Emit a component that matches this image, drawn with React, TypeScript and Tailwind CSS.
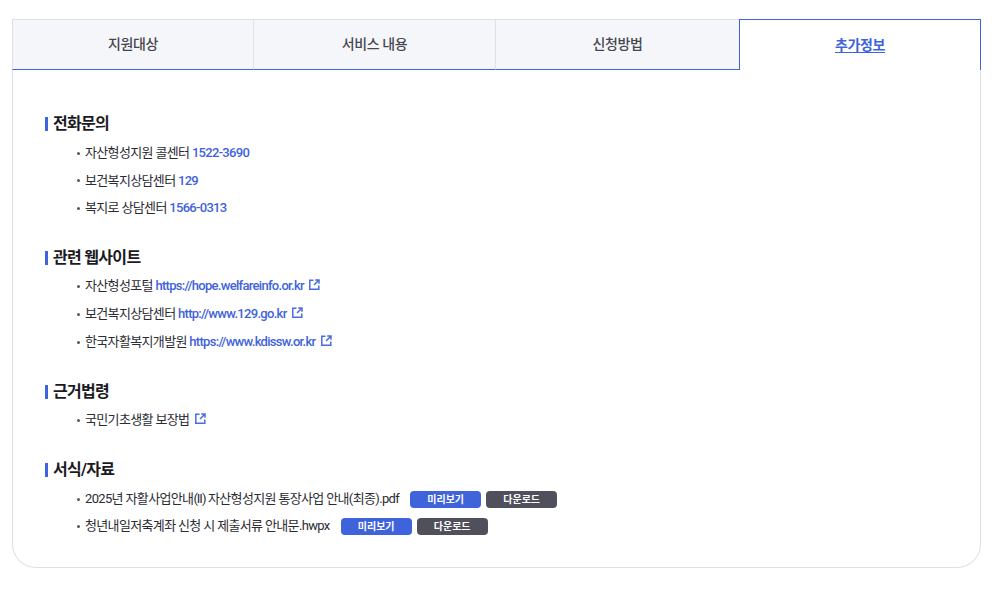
import type { FC } from "react";

const tabs = ["지원대상", "서비스 내용", "신청방법"];

const ExternalIcon: FC = () => (
  <svg width="11" height="11" viewBox="0 0 11 11" fill="none" stroke="#4a6cdf" strokeWidth="1.5" className="ml-[5.5px] mb-[3px] shrink-0">
    <path d="M4.5 1.2H.8v9h9V6.5" />
    <path d="M6.2 1h3.8v3.8M9.8 1.2 5 6" />
  </svg>
);

const Heading: FC<{ text: string }> = ({ text }) => (
  <h3 className="flex items-center h-5 text-[16px] font-bold tracking-[-0.7px] text-[#1b1b1f]">
    <span className="w-[3px] h-[14px] bg-[#3f63db] mr-[5px]" />
    {text}
  </h3>
);

const Row: FC<{ children: React.ReactNode }> = ({ children }) => (
  <li className="flex items-center h-5 pl-[32px] text-[13px] tracking-[-0.65px] text-[#2b2b33]">
    <span className="w-[3px] h-[3px] rounded-full bg-[#55555f] mr-[5px] shrink-0" />
    {children}
  </li>
);

const Val: FC<{ children: React.ReactNode }> = ({ children }) => (
  <span className="ml-[2.5px] font-medium tracking-[-0.7px] text-[#3f63db]">{children}</span>
);

const Btns: FC = () => (
  <span className="flex gap-[5px] ml-[11px]">
    <span className="flex items-center justify-center w-[71px] h-[17px] rounded-[4px] bg-[#3f63db] text-white text-[10px] font-bold tracking-normal">미리보기</span>
    <span className="flex items-center justify-center w-[71px] h-[17px] rounded-[4px] bg-[#50505c] text-white text-[10px] font-bold tracking-normal">다운로드</span>
  </span>
);

export default function App() {
  return (
    <div className="bg-white w-[996px] h-[589px] pt-[19px] pl-[12px] font-['Roboto','Noto_Sans_CJK_KR',sans-serif]">
      <div className="w-[969px] h-[549px] border border-t-0 border-[#e0e0e4] rounded-b-[24px]">
        <div className="flex h-[51px] -mx-px">
          {tabs.map((t, i) => (
            <div
              key={t}
              className={`flex items-center justify-center border-t border-l border-b border-t-[#e0e0e4] border-l-[#dfe1e8] border-b-[#3f63db] bg-[#f5f6fa] text-[14px] font-medium tracking-[-0.4px] text-[#46464f] ${i === 0 ? "w-[241px]" : i === 1 ? "w-[242px]" : "w-[244px]"}`}
            >
              {t}
            </div>
          ))}
          <div className="flex-1 flex items-center justify-center border border-b-0 border-[#3f63db] text-[14px] font-bold tracking-[-0.4px] text-[#3f63db] underline underline-offset-2">
            추가정보
          </div>
        </div>

        <div className="pl-[32px] pt-[44px]">
          <section>
            <Heading text="전화문의" />
            <ul className="mt-[9px] flex flex-col gap-[7.5px]">
              <Row>자산형성지원 콜센터<Val>1522-3690</Val></Row>
              <Row>보건복지상담센터<Val>129</Val></Row>
              <Row>복지로 상담센터<Val>1566-0313</Val></Row>
            </ul>
          </section>
          <section className="mt-[30px]">
            <Heading text="관련 웹사이트" />
            <ul className="mt-[8px] flex flex-col gap-[8px]">
              <Row>자산형성포털<Val>https://hope.welfareinfo.or.kr</Val><ExternalIcon /></Row>
              <Row>보건복지상담센터<Val>http://www.129.go.kr</Val><ExternalIcon /></Row>
              <Row>한국자활복지개발원<Val>https://www.kdissw.or.kr</Val><ExternalIcon /></Row>
            </ul>
          </section>
          <section className="mt-[30px]">
            <Heading text="근거법령" />
            <ul className="mt-[8px]">
              <Row>국민기초생활 보장법<ExternalIcon /></Row>
            </ul>
          </section>
          <section className="mt-[30px]">
            <Heading text="서식/자료" />
            <ul className="mt-[9px] flex flex-col gap-[7px]">
              <Row><span>2025년 자활사업안내<span className="tracking-[-1px]">(II)</span> 자산형성지원 통장사업 안내(최종).pdf</span><Btns /></Row>
              <Row>청년내일저축계좌 신청 시 제출서류 안내문.hwpx<Btns /></Row>
            </ul>
          </section>
        </div>
      </div>
    </div>
  );
}
